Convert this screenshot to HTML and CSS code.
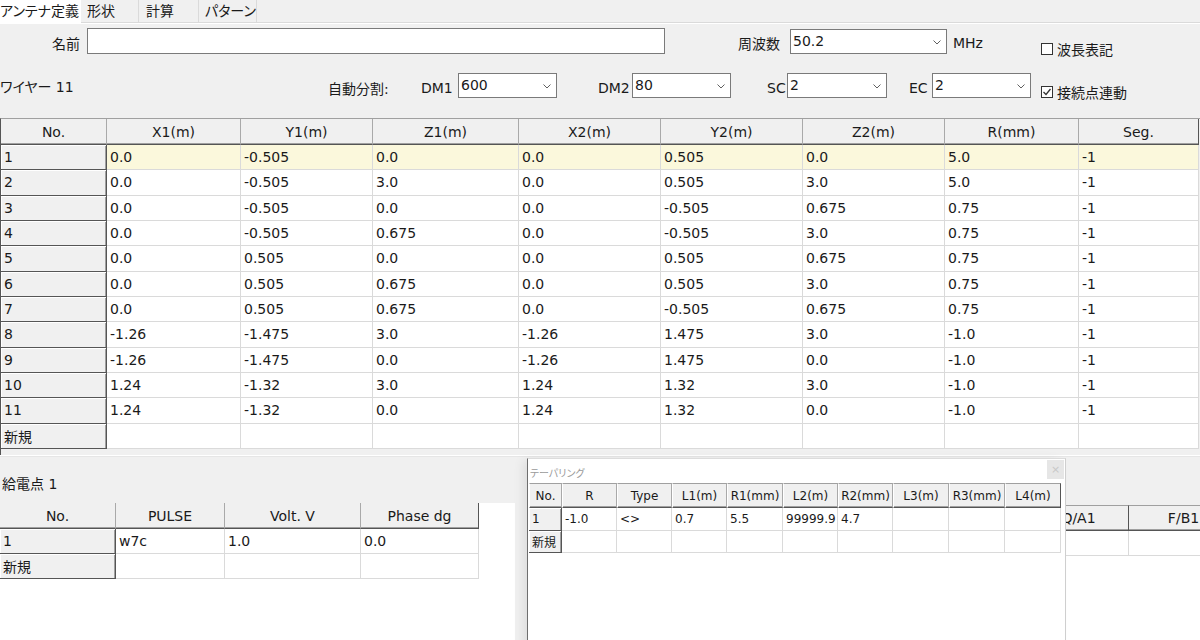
FILE: index.html
```html
<!DOCTYPE html>
<html lang="ja">
<head>
    <meta charset="UTF-8">
    <meta name="viewport" content="width=device-width, initial-scale=1.0">
    <title>アンテナ定義</title>
    <link rel="stylesheet" href="styles.css">
</head>
<body>

    <div class="tabs">
        <div class="tab active">アンテナ定義</div>
        <div class="tab">形状</div>
        <div class="tab tab-wide">計算</div>
        <div class="tab">パターン</div>
    </div>

    <div class="page">
        <div class="form-row row-name">
            <span class="label label-name">名前</span>
            <div class="text-input input-name"></div>
            <span class="label label-freq">周波数</span>
            <div class="combo combo-freq">50.2
                <svg class="chevron" width="8" height="5" viewBox="0 0 8 5"><polyline points="0.5,0.5 4,4 7.5,0.5"/></svg>
            </div>
            <span class="label label-unit">MHz</span>
            <label class="check check-wave">
                <span class="box"></span>波長表記
            </label>
        </div>

        <div class="form-row row-wire">
            <span class="label wire-count">ワイヤー 11</span>
            <span class="label label-auto">自動分割:</span>
            <span class="label label-dm1">DM1</span>
            <div class="combo combo-dm">600
                <svg class="chevron" width="8" height="5" viewBox="0 0 8 5"><polyline points="0.5,0.5 4,4 7.5,0.5"/></svg>
            </div>
            <span class="label label-dm2">DM2</span>
            <div class="combo combo-dm">80
                <svg class="chevron" width="8" height="5" viewBox="0 0 8 5"><polyline points="0.5,0.5 4,4 7.5,0.5"/></svg>
            </div>
            <span class="label label-sc">SC</span>
            <div class="combo combo-sc">2
                <svg class="chevron" width="8" height="5" viewBox="0 0 8 5"><polyline points="0.5,0.5 4,4 7.5,0.5"/></svg>
            </div>
            <span class="label label-ec">EC</span>
            <div class="combo combo-dm">2
                <svg class="chevron" width="8" height="5" viewBox="0 0 8 5"><polyline points="0.5,0.5 4,4 7.5,0.5"/></svg>
            </div>
            <label class="check check-link">
                <span class="box"><svg width="10" height="10" viewBox="0 0 10 10"><polyline points="1.5,5 4,7.5 8.5,2"/></svg></span>接続点連動
            </label>
        </div>

        <div class="wire-panel">
            <table class="grid wire-grid">
                <colgroup>
                    <col style="width:106px"><col style="width:134px"><col style="width:132px">
                    <col style="width:146px"><col style="width:142px"><col style="width:142px">
                    <col style="width:142px"><col style="width:134px"><col style="width:120px">
                </colgroup>
                <thead>
                    <tr><th>No.</th><th>X1(m)</th><th>Y1(m)</th><th>Z1(m)</th><th>X2(m)</th><th>Y2(m)</th><th>Z2(m)</th><th>R(mm)</th><th class="last">Seg.</th></tr>
                </thead>
                <tbody>
                    <tr class="current"><th>1</th><td>0.0</td><td>-0.505</td><td>0.0</td><td>0.0</td><td>0.505</td><td>0.0</td><td>5.0</td><td>-1</td></tr>
                    <tr><th>2</th><td>0.0</td><td>-0.505</td><td>3.0</td><td>0.0</td><td>0.505</td><td>3.0</td><td>5.0</td><td>-1</td></tr>
                    <tr><th>3</th><td>0.0</td><td>-0.505</td><td>0.0</td><td>0.0</td><td>-0.505</td><td>0.675</td><td>0.75</td><td>-1</td></tr>
                    <tr><th>4</th><td>0.0</td><td>-0.505</td><td>0.675</td><td>0.0</td><td>-0.505</td><td>3.0</td><td>0.75</td><td>-1</td></tr>
                    <tr><th>5</th><td>0.0</td><td>0.505</td><td>0.0</td><td>0.0</td><td>0.505</td><td>0.675</td><td>0.75</td><td>-1</td></tr>
                    <tr><th>6</th><td>0.0</td><td>0.505</td><td>0.675</td><td>0.0</td><td>0.505</td><td>3.0</td><td>0.75</td><td>-1</td></tr>
                    <tr><th>7</th><td>0.0</td><td>0.505</td><td>0.675</td><td>0.0</td><td>-0.505</td><td>0.675</td><td>0.75</td><td>-1</td></tr>
                    <tr><th>8</th><td>-1.26</td><td>-1.475</td><td>3.0</td><td>-1.26</td><td>1.475</td><td>3.0</td><td>-1.0</td><td>-1</td></tr>
                    <tr><th>9</th><td>-1.26</td><td>-1.475</td><td>0.0</td><td>-1.26</td><td>1.475</td><td>0.0</td><td>-1.0</td><td>-1</td></tr>
                    <tr><th>10</th><td>1.24</td><td>-1.32</td><td>3.0</td><td>1.24</td><td>1.32</td><td>3.0</td><td>-1.0</td><td>-1</td></tr>
                    <tr><th>11</th><td>1.24</td><td>-1.32</td><td>0.0</td><td>1.24</td><td>1.32</td><td>0.0</td><td>-1.0</td><td>-1</td></tr>
                    <tr><th>新規</th><td></td><td></td><td></td><td></td><td></td><td></td><td></td><td></td></tr>
                </tbody>
            </table>
        </div>

        <div class="splitter"></div>

        <div class="bottom">
            <div class="feed">
                <div class="panel-title">給電点 1</div>
                <div class="panel-body">
                    <table class="grid feed-grid">
                        <colgroup>
                            <col style="width:116px"><col style="width:109px"><col style="width:136px"><col style="width:118px">
                        </colgroup>
                        <thead>
                            <tr><th>No.</th><th>PULSE</th><th>Volt. V</th><th class="last">Phase dg</th></tr>
                        </thead>
                        <tbody>
                            <tr><th>1</th><td>w7c</td><td>1.0</td><td>0.0</td></tr>
                            <tr><th>新規</th><td></td><td></td><td></td></tr>
                        </tbody>
                    </table>
                </div>
            </div>

            <div class="result">
                <div class="panel-title result-title"></div>
                <div class="panel-body">
                    <table class="grid result-grid">
                        <colgroup>
                            <col style="width:502px"><col style="width:100px"><col style="width:110px">
                        </colgroup>
                        <thead>
                            <tr><th></th><th>Q/A1</th><th>F/B1</th></tr>
                        </thead>
                        <tbody>
                            <tr><td></td><td></td><td></td></tr>
                        </tbody>
                    </table>
                </div>
            </div>

            <div class="taper-window">
                <div class="taper-titlebar">
                    <span class="taper-title">テーパリング</span>
                    <span class="close-button">×</span>
                </div>
                <table class="grid taper-grid">
                    <colgroup>
                        <col style="width:33px"><col style="width:55px"><col style="width:55px"><col style="width:55px">
                        <col style="width:56px"><col style="width:55px"><col style="width:55px"><col style="width:56px">
                        <col style="width:56px"><col style="width:56px">
                    </colgroup>
                    <thead>
                        <tr><th>No.</th><th>R</th><th>Type</th><th>L1(m)</th><th>R1(mm)</th><th>L2(m)</th><th>R2(mm)</th><th>L3(m)</th><th>R3(mm)</th><th class="last">L4(m)</th></tr>
                    </thead>
                    <tbody>
                        <tr><th>1</th><td>-1.0</td><td>&lt;&gt;</td><td>0.7</td><td>5.5</td><td>99999.9</td><td>4.7</td><td></td><td></td><td></td></tr>
                        <tr><th>新規</th><td></td><td></td><td></td><td></td><td></td><td></td><td></td><td></td><td></td></tr>
                    </tbody>
                </table>
            </div>
        </div>
    </div>

</body>
</html>
```

FILE: styles.css
```css
body {
    margin: 0;
    width: 1200px;
    height: 640px;
    overflow: hidden;
    background-color: #f0f0f0;
    font-family: "DejaVu Sans", "Noto Sans CJK JP", sans-serif;
    font-size: 14px;
    color: #1a1a1a;
    font-feature-settings: "palt";
}

/* tabs */

.tabs {
    display: flex;
    height: 22px;
    border-bottom: 1px solid #dadada;
}

.tab {
    box-sizing: border-box;
    width: 58px;
    padding-left: 6px;
    line-height: 22px;
    border-right: 1px solid #dadada;
}

.tab-wide {
    width: 60px;
    padding-left: 7px;
}

.tab.active {
    width: 81px;
    height: 23px;
    margin-bottom: -1px;
    padding-left: 0;
    background-color: #fff;
    border-right: none;
}

.page {
    border-top: 1px solid #fff;
}

/* form rows */

.form-row {
    display: flex;
    align-items: center;
}

.row-name {
    height: 26px;
    margin-top: 4px;
}

.row-wire {
    height: 25px;
    margin-top: 19px;
}

.label {
    box-sizing: border-box;
    white-space: nowrap;
}

.label-name {
    width: 80px;
    text-align: right;
    padding-top: 3px;
}

.label-freq {
    width: 52px;
    margin-left: 73px;
    padding-top: 3px;
}

.label-unit {
    margin-left: 6px;
    padding-top: 3px;
}

.wire-count {
    width: 328px;
}

.label-auto {
    width: 93px;
    padding-top: 4px;
}

.label-dm1 {
    width: 37px;
    padding-top: 4px;
}

.label-dm2 {
    width: 34px;
    margin-left: 41px;
    padding-top: 4px;
}

.label-sc {
    width: 20px;
    margin-left: 36px;
    padding-top: 4px;
}

.label-ec {
    width: 23px;
    margin-left: 22px;
    padding-top: 4px;
}

.text-input {
    box-sizing: border-box;
    width: 578px;
    height: 26px;
    margin-left: 7px;
    background-color: #fff;
    border: 1px solid #7a7a7a;
}

.combo {
    position: relative;
    box-sizing: border-box;
    height: 25px;
    padding-left: 2px;
    line-height: 23px;
    background-color: #fff;
    border: 1px solid #7a7a7a;
}

.combo-freq {
    width: 157px;
}

.combo-dm {
    width: 99px;
}

.combo-sc {
    width: 100px;
}

.chevron {
    position: absolute;
    right: 5px;
    top: 10px;
}

.chevron polyline {
    fill: none;
    stroke: #606060;
    stroke-width: 1;
}

.check {
    display: flex;
    align-items: center;
    white-space: nowrap;
}

.check .box {
    box-sizing: border-box;
    display: flex;
    align-items: center;
    justify-content: center;
    width: 12px;
    height: 12px;
    margin-right: 4px;
    background-color: #fff;
    border: 1px solid #333;
}

.check .box polyline {
    fill: none;
    stroke: #333;
    stroke-width: 1.3;
}

.check-wave {
    margin-left: 58px;
    align-self: flex-end;
    margin-bottom: -5px;
}

.check-link {
    margin-left: 10px;
    padding-top: 12px;
}

/* grids */

.grid {
    table-layout: fixed;
    border-collapse: separate;
    border-spacing: 0;
    background-color: #fff;
}

.grid th,
.grid td {
    box-sizing: border-box;
    padding: 0 0 0 3px;
    overflow: hidden;
    white-space: nowrap;
    font-weight: normal;
    text-align: left;
    border-right: 1px solid #dadada;
    border-bottom: 1px solid #dadada;
}

.grid thead th {
    padding: 0;
    text-align: center;
    background-color: #f0f0f0;
    border-right: 1px solid #a9a9a9;
    border-bottom: 1px solid #555;
    box-shadow: inset 0 -1px 0 #a0a0a0;
}

.grid thead th.last {
    border-right-color: #555;
}

.grid tbody th {
    background-color: #f0f0f0;
    border-right: 1px solid #555;
    border-bottom: 1px solid #555;
    box-shadow: inset 1px 1px 0 #fff, inset -1px 0 0 #a0a0a0;
}

.grid tr.current td {
    background-color: #fbf8dc;
}

.wire-panel {
    box-sizing: border-box;
    height: 337px;
    margin-top: 20px;
    border-top: 1px solid #a0a0a0;
    border-left: 1px solid #555;
}

.wire-grid {
    width: 1197px;
}

.wire-grid thead tr {
    height: 26px;
}

.wire-grid tbody tr {
    height: 25.33px;
}

.splitter {
    height: 1px;
    border-top: 1px solid #fff;
    background-color: #e6e6e6;
}

/* bottom panels */

.bottom {
    position: relative;
    display: flex;
    height: 183px;
}

.feed {
    display: flex;
    flex-direction: column;
    width: 515px;
}

.panel-title {
    box-sizing: border-box;
    height: 46px;
    padding: 18px 0 0 2px;
    line-height: 18px;
}

.panel-body {
    flex: 1;
    overflow: hidden;
    background-color: #fff;
}

.feed-grid {
    width: 479px;
}

.feed-grid thead tr {
    height: 26px;
}

.feed-grid tbody tr {
    height: 25px;
}

.result {
    display: flex;
    flex-direction: column;
    flex: 1;
    margin-left: 12px;
    overflow: hidden;
}

.result-title {
    height: 48px;
}

.result-grid {
    width: 712px;
}

.result-grid thead th {
    border-top: 1px solid #a0a0a0;
    border-right-color: #555;
}

.result-grid thead tr {
    height: 26px;
}

.result-grid tbody tr {
    height: 25px;
}

/* taper window */

.taper-window {
    position: absolute;
    left: 527px;
    top: 1px;
    box-sizing: border-box;
    width: 539px;
    height: 200px;
    background-color: #fff;
    border-left: 1px solid #6e6e6e;
    border-top: 1px solid #dcdcdc;
    border-right: 1px solid #cfcfcf;
    box-shadow: -6px 0 10px -2px rgba(0, 0, 0, 0.08);
}

.taper-titlebar {
    display: flex;
    justify-content: space-between;
    height: 24px;
}

.taper-title {
    padding: 6px 0 0 2px;
    font-size: 10px;
    color: #9a9a9a;
}

.close-button {
    width: 17px;
    height: 19px;
    margin: 1px 1px 0 0;
    line-height: 19px;
    text-align: center;
    font-size: 11px;
    color: #c8c8c8;
    background-color: #e6e6e6;
}

.taper-grid {
    width: 532px;
    margin-left: 1px;
    font-size: 12px;
}

.taper-grid thead th {
    border-top: 1px solid #a0a0a0;
    border-left: 1px solid #fff;
}

.taper-grid thead tr {
    height: 25px;
}

.taper-grid tbody tr {
    height: 23px;
}

.taper-grid tbody tr + tr {
    height: 22px;
}
```
